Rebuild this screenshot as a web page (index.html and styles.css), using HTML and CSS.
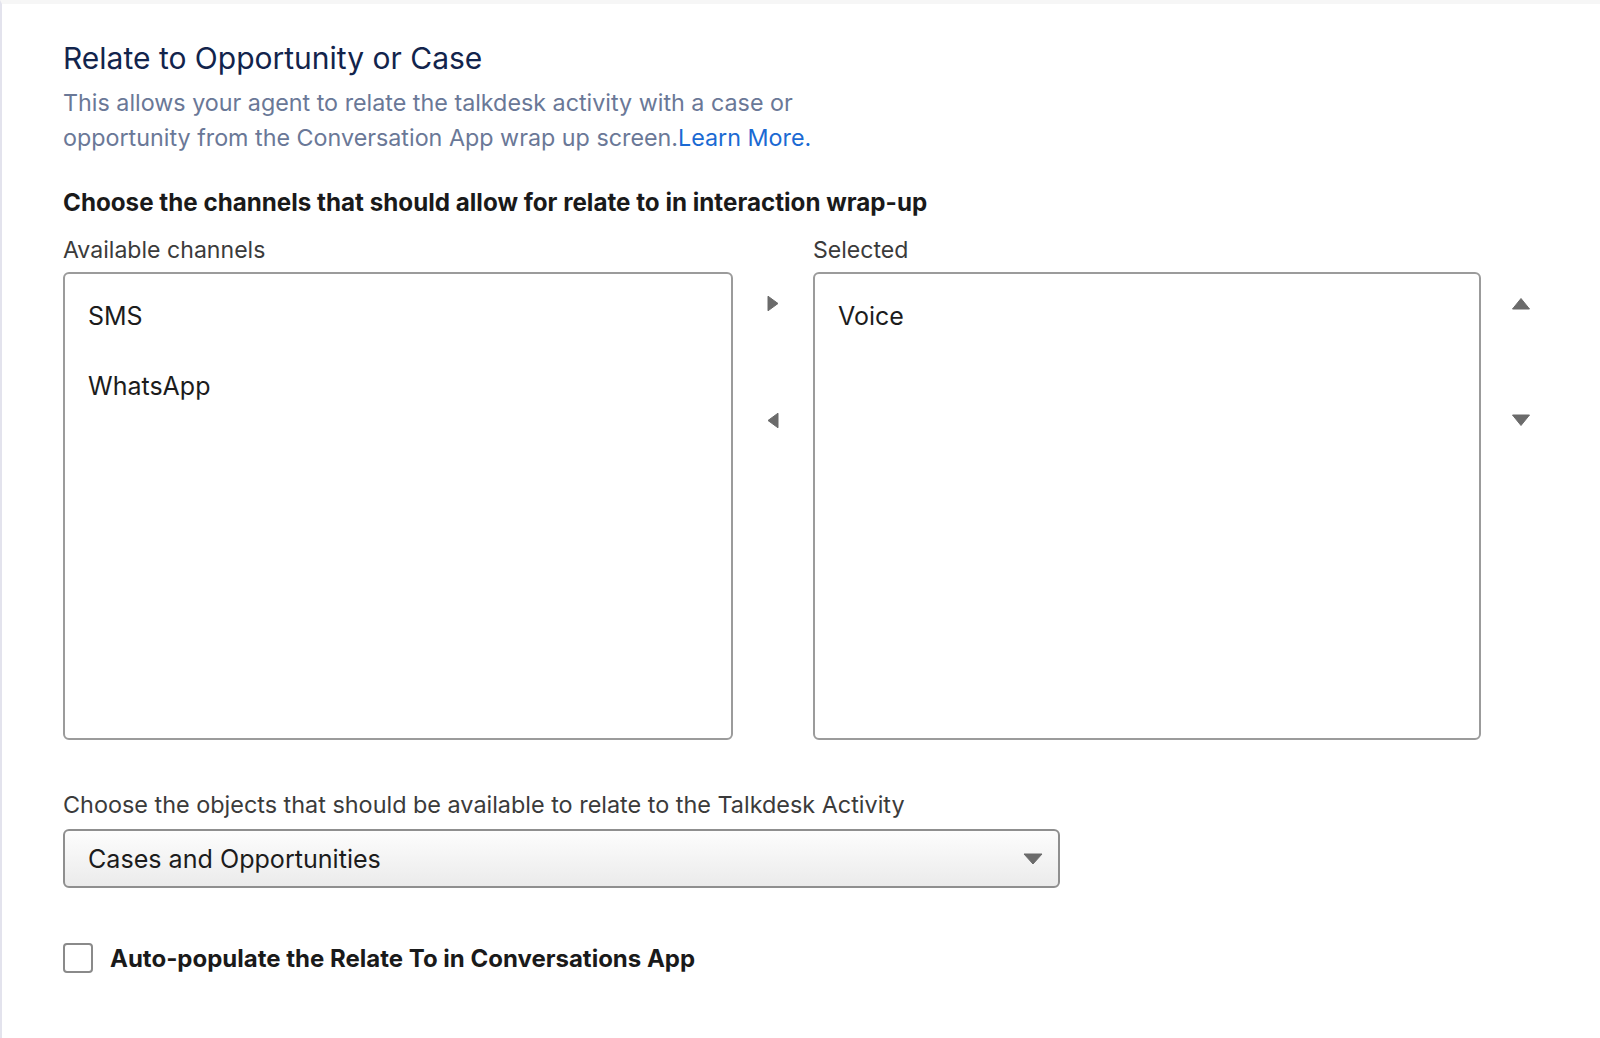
FILE: index.html
```html
<!DOCTYPE html>
<html lang="en">
<head>
<meta charset="utf-8">
<title>Relate to Opportunity or Case</title>
<link rel="stylesheet" href="styles.css">
</head>
<body>
<div class="page">
  <h1 class="title">Relate to Opportunity or Case</h1>
  <p class="desc">This allows your agent to relate the talkdesk activity with a case or<br>opportunity from the Conversation App wrap up screen.<a class="link" href="#">Learn More.</a></p>

  <h2 class="heading">Choose the channels that should allow for relate to in interaction wrap-up</h2>

  <div class="dual">
    <div class="lbl">Available channels</div>
    <div></div>
    <div class="lbl">Selected</div>
    <div></div>

    <ul class="listbox">
      <li>SMS</li>
      <li>WhatsApp</li>
    </ul>
    <div class="moves">
      <button class="arrow" aria-label="Move to selected"><svg width="12" height="17" viewBox="0 0 12 17"><path d="M1 1.2 L11 8.5 L1 15.8 Z" fill="#6b6b6b" stroke="#6b6b6b" stroke-linejoin="round" stroke-width="1"/></svg></button>
      <button class="arrow" aria-label="Move to available"><svg width="12" height="17" viewBox="0 0 12 17"><path d="M11 1.2 L1 8.5 L11 15.8 Z" fill="#6b6b6b" stroke="#6b6b6b" stroke-linejoin="round" stroke-width="1"/></svg></button>
    </div>
    <ul class="listbox">
      <li>Voice</li>
    </ul>
    <div class="moves">
      <button class="arrow" aria-label="Move up"><svg width="20" height="13" viewBox="0 0 20 13"><path d="M1.5 12 L10 1.5 L18.5 12 Z" fill="#6b6b6b" stroke="#6b6b6b" stroke-linejoin="round" stroke-width="1"/></svg></button>
      <button class="arrow" aria-label="Move down"><svg width="20" height="13" viewBox="0 0 20 13"><path d="M1.5 1 L10 11.5 L18.5 1 Z" fill="#6b6b6b" stroke="#6b6b6b" stroke-linejoin="round" stroke-width="1"/></svg></button>
    </div>
  </div>

  <div class="lbl objects">Choose the objects that should be available to relate to the Talkdesk Activity</div>
  <div class="select">
    <span>Cases and Opportunities</span>
    <svg class="caret" width="20" height="12" viewBox="0 0 20 12"><path d="M1 1 L10 11 L19 1 Z" fill="#6b6b6b" stroke="#6b6b6b" stroke-linejoin="round" stroke-width="1"/></svg>
  </div>

  <label class="check">
    <span class="box"></span>
    <span class="check-label">Auto-populate the Relate To in Conversations App</span>
  </label>
</div>
</body>
</html>
```

FILE: styles.css
```css
html, body {
  margin: 0;
  padding: 0;
  background: #ffffff;
}

body {
  font-family: Inter, "Liberation Sans", Arial, sans-serif;
  color: #181818;
}

.page {
  box-sizing: border-box;
  min-height: 1038px;
  border-top: 4px solid #f6f6f6;
  border-left: 2px solid #e3e3ed;
  padding: 0 0 0 61px;
}

.title {
  margin: 36px 0 0;
  font-size: 30px;
  line-height: 36px;
  font-weight: 400;
  color: #12244c;
}

.desc {
  margin: 9px 0 0;
  font-size: 23.3px;
  line-height: 35px;
  color: #6a7897;
}

.link {
  color: #1b6ad3;
  text-decoration: none;
}

.heading {
  margin: 33px 0 0;
  font-size: 24.2px;
  line-height: 30px;
  font-weight: 700;
  color: #1a1a1a;
}

.dual {
  margin-top: 17px;
  display: grid;
  grid-template-columns: 670px 80px 668px 80px;
  grid-template-rows: 30px 468px;
  row-gap: 7px;
}

.lbl {
  font-size: 23.1px;
  line-height: 30px;
  color: #3b3b3b;
}

.listbox {
  box-sizing: border-box;
  margin: 0;
  padding: 7px 0 0 23px;
  list-style: none;
  border: 2px solid #9b9b9b;
  border-radius: 6px;
  background: #fff;
}

.listbox li {
  height: 70px;
  line-height: 70px;
  font-size: 25px;
  color: #1c1c1c;
}

.moves {
  display: flex;
  flex-direction: column;
  align-items: center;
  padding-top: 22px;
  gap: 99px;
}

.arrow {
  border: 0;
  background: none;
  padding: 0;
  width: 24px;
  height: 18px;
  display: flex;
  align-items: center;
  justify-content: center;
}

.objects {
  margin-top: 50px;
  font-size: 23.4px;
}

.select {
  box-sizing: border-box;
  margin-top: 9px;
  width: 997px;
  height: 59px;
  border: 2px solid #8f8f8f;
  border-radius: 6px;
  background: linear-gradient(#fdfdfd, #ebebeb);
  display: flex;
  align-items: center;
  justify-content: space-between;
  padding: 0 15px 0 23px;
  font-size: 25.1px;
  color: #1c1c1c;
}

.caret {
  display: block;
}

.check {
  margin-top: 55px;
  display: flex;
  align-items: center;
  gap: 17px;
}

.box {
  box-sizing: border-box;
  width: 30px;
  height: 30px;
  border: 2px solid #8a8a8a;
  border-radius: 4px;
  background: #fff;
}

.check-label {
  font-size: 24px;
  font-weight: 700;
  color: #1a1a1a;
}
```
